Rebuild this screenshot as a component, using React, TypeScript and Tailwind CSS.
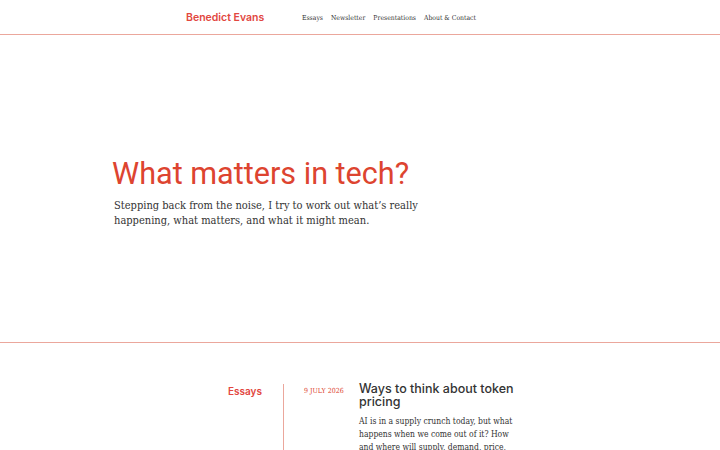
export default function App() {
  const serif = { fontFamily: '"DejaVu Serif Condensed", "DejaVu Serif", serif' };
  return (
    <div className="min-h-screen bg-white" style={{ fontFamily: 'Inter, sans-serif' }}>
      <header className="h-[35px] border-b border-[#eba79c]">
        <div className="mx-auto flex h-full w-[348px] items-center pt-[2px]">
          <span className="w-[116px] text-[10.5px] font-semibold text-[#e2473f]">Benedict Evans</span>
          <nav className="flex gap-2 pt-[1px] text-[6.8px] text-[#333]" style={serif}>
            <span>Essays</span>
            <span>Newsletter</span>
            <span>Presentations</span>
            <span>About &amp; Contact</span>
          </nav>
        </div>
      </header>

      <section className="flex h-[308px] items-center border-b border-[#eba79c]">
        <div className="mx-auto w-[496px] pt-[7px]">
          <h1 className="text-[30.6px] leading-[36px] text-[#dd4430]" style={{ fontFamily: 'Roboto, sans-serif' }}>
            What matters in tech?
          </h1>
          <p className="mt-[6px] w-[330px] pl-[2px] text-[11px] leading-[15px] text-[#333]" style={serif}>
            Stepping back from the noise, I try to work out what’s really happening, what matters, and what it might mean.
          </p>
        </div>
      </section>

      <section className="pt-[41px]">
        <div className="mx-auto flex w-[348px]">
          <h2 className="w-[76px] text-right text-[10px] font-semibold leading-[14px] text-[#e2473f]">Essays</h2>
          <div className="ml-[21px] flex border-l border-[#eba79c] pl-[20px] pb-10">
            <span className="w-[55px] pt-[2px] text-[7px] text-[#dd4430]" style={serif}>9 JULY 2026</span>
            <div className="w-[162px]">
              <h3 className="-mt-[1px] text-[12.5px] font-medium leading-[12.5px] text-[#333]">Ways to think about token pricing</h3>
              <p className="mt-[7px] text-[8.5px] leading-[13px] text-[#333]" style={serif}>
                AI is in a supply crunch today, but what happens when we come out of it? How and where will supply, demand, price, and value change?
              </p>
            </div>
          </div>
        </div>
      </section>
    </div>
  );
}
